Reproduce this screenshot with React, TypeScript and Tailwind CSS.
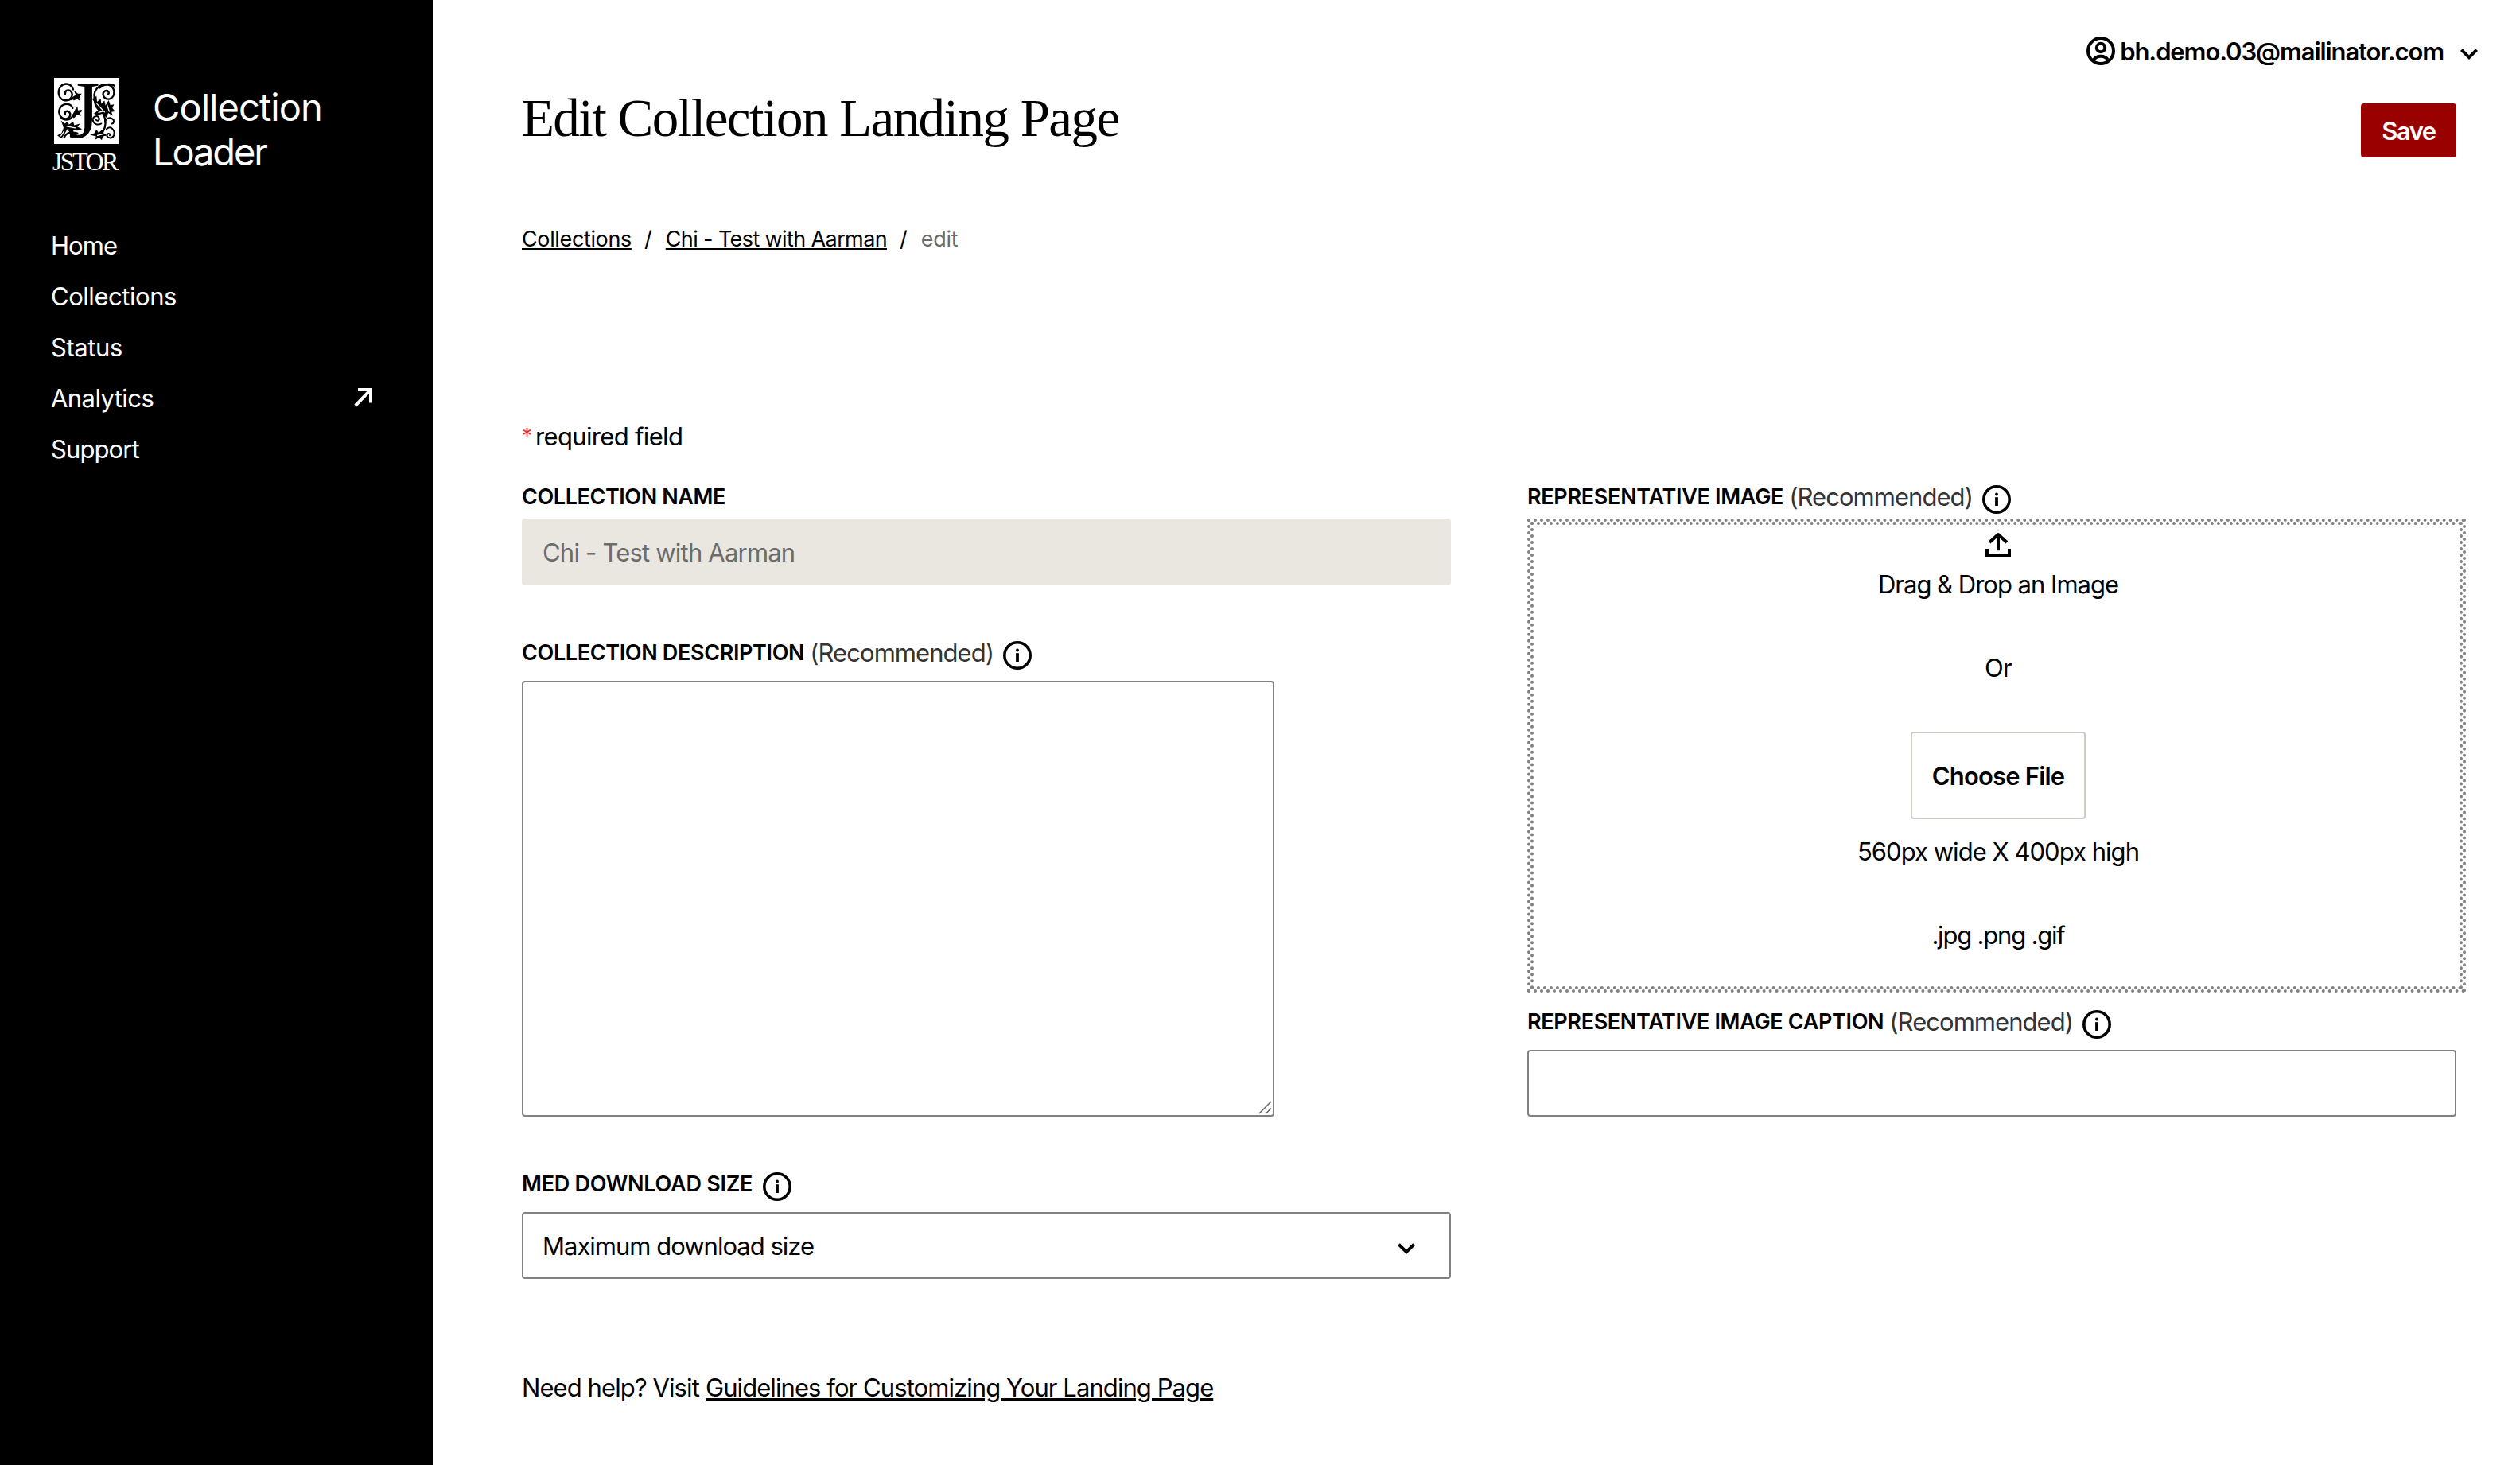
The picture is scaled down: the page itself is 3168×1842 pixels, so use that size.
import type { ReactNode } from "react";

function JstorMark() {
  return (
    <svg className="block h-[83px] w-[82px]" viewBox="24 25 246 247" preserveAspectRatio="none" aria-hidden="true">
      <rect x="24" y="25" width="246" height="247" fill="#fff" />
      <text x="77" y="248" fontFamily="Liberation Serif, serif" fontSize="308" fill="#000">
        J
      </text>
      <g fill="none" stroke="#000" strokeWidth="7" strokeLinecap="round">
        <path d="M96 68C90 46 64 40 48 58C34 78 42 106 66 109C88 110 98 88 88 76C80 66 64 72 66 84" />
        <path d="M56 106C80 116 92 98 120 96" />
        <path d="M94 138C88 120 62 118 50 132C36 150 44 176 66 178C84 178 90 160 80 152C72 146 62 152 66 162" />
        <path d="M48 170C60 186 82 184 92 170C100 158 108 150 124 150" />
        <path d="M176 98C172 66 200 46 226 50C256 56 258 98 232 104C210 106 202 82 216 74C226 70 234 78 228 86" />
        <path d="M196 62C214 46 238 46 252 54" />
        <path d="M172 104C188 124 208 150 216 176C222 206 210 228 196 240" />
        <path d="M202 196C188 204 170 196 170 180C172 166 190 164 194 176C196 186 184 188 182 180" strokeWidth="6" />
        <path d="M216 190C220 174 238 170 248 182C252 190 246 198 240 196" strokeWidth="6" />
        <path d="M222 216C240 200 254 224 250 238C244 256 220 250 224 238C228 230 238 234 234 240" strokeWidth="6" />
        <path d="M112 232C92 228 72 226 62 248" />
      </g>
      <g fill="#000">
        <path d="M92 98L106 88L98 72L114 84L128 84L118 98L124 112L110 104L98 110Z" />
        <path d="M92 166L104 142L112 132L114 146L130 144L120 156L128 166L110 164L98 176Z" />
        <path d="M50 184L64 196L76 188L80 200L96 188L100 202L122 196L112 208L130 216L112 222L98 220L82 228L74 216L64 234L52 252L36 240L52 232L60 212Z" />
        <path d="M172 104L184 92L186 114L200 104L202 122L214 110L218 128L230 108L236 126L250 124L244 138L254 150L240 152L246 166L228 156L222 174L206 158L188 166L174 158L190 146L178 132Z" />
        <path d="M160 238L176 232L184 218L192 230L206 218L212 234L226 240L208 244L204 258L194 248L180 256L182 244Z" />
      </g>
      <g fill="none" stroke="#fff" strokeWidth="4" strokeLinecap="round">
        <path d="M186 122L214 152" />
        <path d="M224 126L232 150" />
        <path d="M192 154L206 150" />
        <path d="M72 206L104 212" />
        <path d="M62 224L50 242" />
        <path d="M188 240L206 236" />
      </g>
    </svg>
  );
}

function InfoIcon() {
  return (
    <svg className="mt-[6px] block size-9 shrink-0" viewBox="0 0 36 36" aria-hidden="true">
      <circle cx="18" cy="18" r="16.2" fill="none" stroke="#000" strokeWidth="3.6" />
      <circle cx="18" cy="11.6" r="2" fill="#000" />
      <rect x="16.1" y="15.2" width="3.8" height="10.8" fill="#000" />
    </svg>
  );
}

function UserIcon() {
  return (
    <svg className="block size-9" viewBox="0 0 36 36" fill="none" stroke="#000" aria-hidden="true">
      <circle cx="18" cy="18" r="16" strokeWidth="4" />
      <circle cx="18" cy="14" r="5.2" strokeWidth="4" />
      <path d="M8.8 29.6C10.8 26.4 14 24.8 18 24.8S25.2 26.4 27.2 29.6" strokeWidth="4" />
    </svg>
  );
}

function Chevron() {
  return (
    <svg className="block h-[14px] w-[22px]" viewBox="0 0 22 14" fill="none" stroke="#000" aria-hidden="true">
      <path d="M1.4 1.6L11 11.2L20.6 1.6" strokeWidth="4" />
    </svg>
  );
}

function ArrowOut() {
  return (
    <svg className="mt-[19px] block size-6" viewBox="0 0 24 24" fill="none" stroke="#fff" strokeWidth="4" aria-hidden="true">
      <path d="M5 2H21V18.5" />
      <path d="M21 2L1.8 22" />
    </svg>
  );
}

function UploadIcon() {
  return (
    <svg className="block h-[31px] w-8 shrink-0" viewBox="0 0 32 31" fill="none" stroke="#000" strokeWidth="4" aria-hidden="true">
      <path d="M2 21V29H30V21" />
      <path d="M16 3V23.2" />
      <path d="M5 13L16 3L27 13" strokeLinejoin="round" />
    </svg>
  );
}

function Label({ tracking, tall, recommended, info, children }: {
  tracking: string; tall?: boolean; recommended?: boolean; info?: boolean; children: ReactNode;
}) {
  return (
    <div className={tall ? "flex h-14 items-start" : "flex h-12 items-start"}>
      <span className={`mt-px text-[27px] leading-10 font-semibold whitespace-nowrap ${tracking}`}>{children}</span>
      {recommended && (
        <span className="mt-px ml-[7px] w-[232px] text-[31px] leading-10 tracking-[-0.95px] text-[#333]">(Recommended)</span>
      )}
      {info && (
        <div className={recommended ? "ml-[11px]" : "ml-[13px]"}>
          <InfoIcon />
        </div>
      )}
    </div>
  );
}

const nav = [
  { name: "Home", tracking: "tracking-[-0.93px]" },
  { name: "Collections", tracking: "tracking-[-0.46px]" },
  { name: "Status", tracking: "tracking-[-0.41px]" },
  { name: "Analytics", tracking: "tracking-[-0.57px]", external: true },
  { name: "Support", tracking: "tracking-[-0.9px]" },
];

export default function App() {
  return (
    <div className="flex h-[1842px] w-[3168px] overflow-hidden bg-white font-['Inter',sans-serif] text-black">
      <aside className="w-[544px] shrink-0 bg-black text-white">
        <div className="flex h-[277px] items-start pt-[98px] pl-[66px]">
          <div className="w-[84px]">
            <div className="pl-[2px]">
              <JstorMark />
            </div>
            <div className="mt-[6px] font-['Liberation_Serif',serif] text-[32px] leading-[32px] tracking-[-2.58px] whitespace-nowrap">
              JSTOR
            </div>
          </div>
          <div className="mt-[9px] ml-[42px] text-[47px] leading-[56px]">
            <div className="tracking-[-0.94px]">Collection</div>
            <div className="tracking-[-2.1px]">Loader</div>
          </div>
        </div>
        <nav className="pr-[75px] pl-16">
          {nav.map((n) => (
            <a key={n.name} className="flex h-16 items-start justify-between">
              <span className={`text-[31px] leading-[64px] ${n.tracking}`}>{n.name}</span>
              {n.external && <ArrowOut />}
            </a>
          ))}
        </nav>
      </aside>

      <main className="flex flex-1 flex-col">
        <div className="mt-[46px] mr-[53px] flex h-9 items-center justify-end">
          <UserIcon />
          <span className="mt-[2px] ml-[6px] text-[31px] leading-9 font-semibold tracking-[-1.1px]">bh.demo.03@mailinator.com</span>
          <div className="mt-[7px] ml-[21px]">
            <Chevron />
          </div>
        </div>

        <div className="mt-[26px] mr-20 ml-28 flex h-[90px] items-start justify-between">
          <h1 className="font-['Liberation_Serif',serif] text-[67px] leading-[80px] tracking-[-1.57px] whitespace-nowrap">
            Edit Collection Landing Page
          </h1>
          <button className="mt-[22px] h-[68px] w-[120px] rounded bg-[#990000] pt-px text-[31px] leading-[67px] font-semibold tracking-[-1.5px] text-white">
            Save
          </button>
        </div>

        <div className="mt-[83px] ml-28 flex text-[27px] leading-10 whitespace-nowrap">
          <a className="w-[138px] tracking-[-0.37px] underline decoration-2 underline-offset-[2px]">Collections</a>
          <span className="mr-[17px] ml-4">/</span>
          <a className="tracking-[-0.61px] underline decoration-2 underline-offset-[2px]">Chi - Test with Aarman</a>
          <span className="mr-[17px] ml-4">/</span>
          <span className="tracking-[-0.27px] text-[#6c6c6a]">edit</span>
        </div>

        <div className="mt-[208px] ml-28 flex text-[31px] leading-10">
          <span className="w-[17px] text-[26px] leading-[38px] text-[#e0312b]">*</span>
          <span className="tracking-[-0.66px]">required field</span>
        </div>

        <div className="mt-[35px] ml-28 flex">
          <section className="w-[1168px]">
            <Label tracking="tracking-[-0.42px]">COLLECTION NAME</Label>
            <div className="h-[84px] rounded bg-[#e9e7e0] pt-px pl-[26px] text-[31px] leading-[84px] tracking-[-0.8px] text-[#6c6c6a]">
              Chi - Test with Aarman
            </div>

            <div className="mt-16">
              <Label tracking="tracking-[-0.36px]" tall recommended info>
                COLLECTION DESCRIPTION
              </Label>
            </div>
            <div className="relative h-[548px] w-[946px] rounded border-2 border-[#808080]">
              <svg className="absolute right-px bottom-px size-[17px]" viewBox="0 0 17 17" stroke="#6b6b6b" strokeWidth="1.6" aria-hidden="true">
                <path d="M1 16L16 1M9.5 16L16 9.5" />
              </svg>
            </div>

            <div className="mt-16">
              <Label tracking="tracking-[-0.26px]" tall info>
                MED DOWNLOAD SIZE
              </Label>
            </div>
            <div className="flex h-[84px] items-center justify-between rounded border-2 border-[#808080] pr-[43px] pl-6">
              <span className="mt-px text-[31px] leading-[80px] tracking-[-1px]">Maximum download size</span>
              <div className="mt-[8px]">
                <Chevron />
              </div>
            </div>
          </section>

          <section className="ml-24 w-[1180px]">
            <Label tracking="tracking-[-0.3px]" recommended info>
              REPRESENTATIVE IMAGE
            </Label>
            <div className="h-[596px] border-4 border-dotted border-[#808080]">
              <div className="flex h-full flex-col items-center border-4 border-dotted border-[#808080] pt-[9px] pl-1 text-[31px] leading-[52px]">
                <UploadIcon />
                <div className="mt-[9px] tracking-[-1px]">Drag &amp; Drop an Image</div>
                <div className="mt-[53px] tracking-[-0.7px]">Or</div>
                <button className="mt-[54px] h-[110px] w-[220px] shrink-0 rounded border-2 border-[#cfccc6] pt-px font-semibold tracking-[-0.82px]">
                  Choose File
                </button>
                <div className="mt-[15px] tracking-[-0.97px]">560px wide X 400px high</div>
                <div className="mt-[53px] tracking-[-1.2px]">.jpg .png .gif</div>
              </div>
            </div>
            <div className="mt-4">
              <Label tracking="tracking-[-0.34px]" tall recommended info>
                REPRESENTATIVE IMAGE CAPTION
              </Label>
            </div>
            <div className="h-[84px] w-[1168px] rounded border-2 border-[#808080]" />
          </section>
        </div>

        <p className="mt-[117px] ml-28 flex text-[31px] leading-10 whitespace-nowrap">
          <span className="w-[231px] tracking-[-0.92px]">Need help? Visit</span>
          <a className="tracking-[-0.93px] underline decoration-[3px] underline-offset-[2px]">
            Guidelines for Customizing Your Landing Page
          </a>
        </p>
      </main>
    </div>
  );
}
